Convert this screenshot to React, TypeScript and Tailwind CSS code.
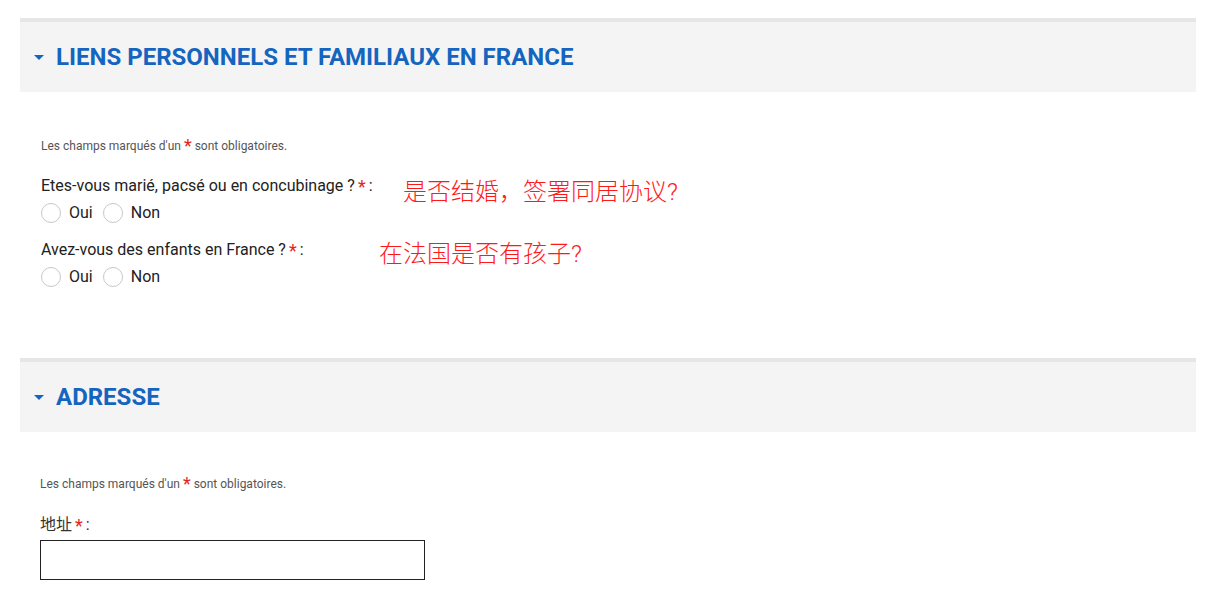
import React from 'react';

const font = { fontFamily: 'Roboto, "Noto Sans CJK SC", sans-serif' };

function SectionHeader({ title }: { title: string }) {
  return (
    <div className="border-t-4 border-[#e6e6e6] bg-[#f4f4f4] h-[74px] flex items-center pl-[14px]">
      <svg width="10" height="6" viewBox="0 0 10 6" className="mr-[12px] mt-[1px]">
        <path d="M0 0 L10 0 L5 5 Z" fill="#1565c0" />
      </svg>
      <h2 className="text-[24px] font-bold text-[#1565c0] leading-none">{title}</h2>
    </div>
  );
}

function Mandatory() {
  return (
    <p className="text-[12px] text-[#555] leading-none">
      Les champs marqués d'un <span className="text-[#e4251b] text-[18px] relative top-[2px]">*</span> sont obligatoires.
    </p>
  );
}

function Star() {
  return <span className="text-[#e4251b] text-[18px] relative top-[1px] mx-[3px]">*</span>;
}

function Radio({ label }: { label: string }) {
  return (
    <label className="flex items-center gap-[8px]">
      <span className="w-[20px] h-[20px] rounded-full border border-[#c8c8c8] bg-white" />
      <span className="text-[16px] text-[#222]">{label}</span>
    </label>
  );
}

function Question({ label, note, noteLeft }: { label: string; note: string; noteLeft: string }) {
  return (
    <div className="relative">
      <div className="text-[16px] text-[#222] leading-[20px] flex items-center">
        {label}
        <Star />:
      </div>
      <div className="flex items-center gap-[10px] mt-[5px]">
        <Radio label="Oui" />
        <Radio label="Non" />
      </div>
      <span className={`absolute ${noteLeft} text-[24px] font-light text-[#ff1a1a] leading-none`}>{note}</span>
    </div>
  );
}

export default function App() {
  return (
    <div className="bg-white w-[1222px] h-[605px] overflow-hidden pt-[18px] px-[20px]" style={font}>
      <div className="w-[1176px]">
        <SectionHeader title="LIENS PERSONNELS ET FAMILIAUX EN FRANCE" />
        <div className="pl-[21px] pt-[43px] pb-[69px]">
          <Mandatory />
          <div className="mt-[23px] flex flex-col gap-[15px]">
            <Question
              label="Etes-vous marié, pacsé ou en concubinage ?"
              note="是否结婚，签署同居协议?"
              noteLeft="left-[362px] top-[4px]"
            />
            <Question
              label="Avez-vous des enfants en France ?"
              note="在法国是否有孩子?"
              noteLeft="left-[338px] top-[2px]"
            />
          </div>
        </div>
        <SectionHeader title="ADRESSE" />
        <div className="pl-[20px] pt-[41px]">
          <Mandatory />
          <div className="mt-[24px] text-[16px] text-[#333] leading-[20px] flex items-center">
            地址
            <Star />:
          </div>
          <div className="mt-[5px] w-[385px] h-[40px] border border-[#222] bg-white" />
        </div>
      </div>
    </div>
  );
}
